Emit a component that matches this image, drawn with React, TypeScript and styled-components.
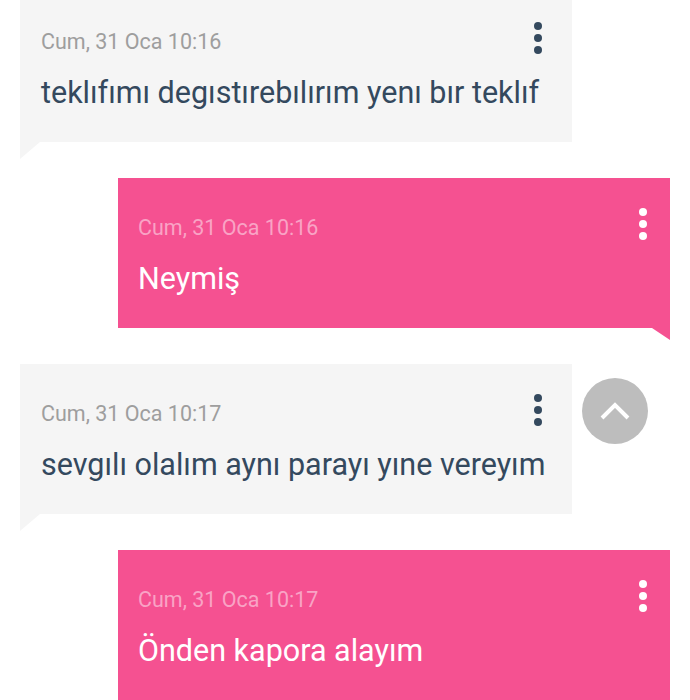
import React from 'react'
import styled, { createGlobalStyle } from 'styled-components'

const Global = createGlobalStyle`
  html, body {
    margin: 0;
    padding: 0;
    background: #ffffff;
    font-family: Roboto, "Noto Sans", sans-serif;
    overflow: hidden;
  }
`

type Side = 'in' | 'out'

const messages: { side: Side, time: string, text: string }[] = [
  { side: 'in', time: 'Cum, 31 Oca 10:16', text: 'teklıfımı degıstırebılırım yenı bır teklıf' },
  { side: 'out', time: 'Cum, 31 Oca 10:16', text: 'Neymiş' },
  { side: 'in', time: 'Cum, 31 Oca 10:17', text: 'sevgılı olalım aynı parayı yıne vereyım' },
  { side: 'out', time: 'Cum, 31 Oca 10:17', text: 'Önden kapora alayım' },
]

export default function App() {
  return (
    <Screen>
      <Global />
      <List>
        {messages.map((m, i) => (
          <Row key={i} side={m.side}>
            <Bubble side={m.side}>
              <Head>
                <Time side={m.side}>{m.time}</Time>
                <Dots side={m.side}>
                  <span /><span /><span />
                </Dots>
              </Head>
              <Text side={m.side}>{m.text}</Text>
            </Bubble>
          </Row>
        ))}
      </List>
      <ScrollUp>
        <svg width="32" height="22" viewBox="0 0 32 22" fill="none" stroke="#fff" strokeWidth="4" strokeLinecap="butt">
          <path d="M3 18 L16 5 L29 18" />
        </svg>
      </ScrollUp>
    </Screen>
  )
}

const Screen = styled.div`
  position: relative;
  width: 690px;
  height: 700px;
  overflow: hidden;
`

const List = styled.div`
  display: flex;
  flex-direction: column;
  gap: 36px;
  margin-top: -8px;
`

const Row = styled.div<{ side: Side }>`
  display: flex;
  justify-content: ${p => p.side === 'in' ? 'flex-start' : 'flex-end'};
  padding: ${p => p.side === 'in' ? '0 0 0 20px' : '0 20px 0 0'};
`

const Bubble = styled.div<{ side: Side }>`
  position: relative;
  width: 552px;
  height: 150px;
  box-sizing: border-box;
  padding: ${p => p.side === 'in' ? '22px 26px 0 21px' : '22px 23px 0 20px'};
  background: ${p => p.side === 'in' ? '#f5f5f5' : '#f55191'};

  &::after {
    content: '';
    position: absolute;
    top: 100%;
    ${p => p.side === 'in' ? 'left: 0;' : 'right: 0;'}
    width: 0;
    height: 0;
    ${p => p.side === 'in'
      ? 'border-top: 17px solid #f5f5f5; border-right: 20px solid transparent;'
      : 'border-top: 12px solid #f55191; border-left: 18px solid transparent;'}
  }
`

const Head = styled.div`
  display: flex;
  justify-content: space-between;
  align-items: flex-start;
  height: 50px;
`

const Time = styled.div<{ side: Side }>`
  margin-top: 15px;
  font-size: 21.5px;
  line-height: 25px;
  color: ${p => p.side === 'in' ? '#9e9e9e' : '#f9a3c5'};
`

const Dots = styled.div<{ side: Side }>`
  display: flex;
  flex-direction: column;
  gap: 4px;
  margin-top: 8px;
  margin-right: ${p => p.side === 'in' ? '4px' : '0'};

  span {
    width: 8px;
    height: 8px;
    border-radius: 50%;
    background: ${p => p.side === 'in' ? '#34495e' : '#ffffff'};
  }
`

const Text = styled.div<{ side: Side }>`
  margin-top: 11px;
  font-size: 30.5px;
  line-height: 36px;
  color: ${p => p.side === 'in' ? '#34495e' : '#ffffff'};
  white-space: nowrap;
`

const ScrollUp = styled.div`
  position: absolute;
  left: 582px;
  top: 378px;
  width: 66px;
  height: 66px;
  border-radius: 50%;
  background: #bdbdbd;
  display: flex;
  align-items: center;
  justify-content: center;
`
